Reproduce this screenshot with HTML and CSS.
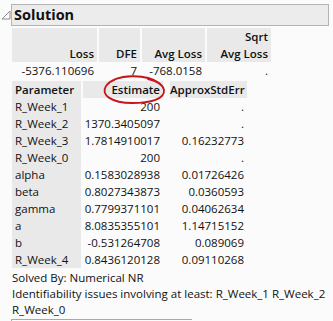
FILE: index.html
```html
<!DOCTYPE html>
<html>
<head>
<meta charset="utf-8">
<link rel="stylesheet" href="styles.css">
</head>
<body>
<div class="report">
  <div class="outline-head">
    <svg class="disclosure" width="10" height="10" viewBox="0 0 10 10"><polygon points="9,1 9,9 1,9" fill="#fdfdfd" stroke="#8a8a8a" stroke-width="1"/></svg>
    <div class="title-box">Solution</div>
  </div>
  <div class="outline-body">
    <div class="summary">
      <div class="hd">Loss</div>
      <div class="hd">DFE</div>
      <div class="hd">Avg Loss</div>
      <div class="hd">Sqrt<br>Avg Loss</div>
      <div class="cell">-5376.110696</div>
      <div class="cell">7</div>
      <div class="cell">-768.0158</div>
      <div class="cell">.</div>
    </div>
    <div class="params">
      <div class="hd lab">Parameter</div>
      <div class="hd">Estimate</div>
      <div class="hd">ApproxStdErr</div>

      <div class="lab">R_Week_1</div><div class="cell">200</div><div class="cell">.</div>
      <div class="lab">R_Week_2</div><div class="cell">1370.3405097</div><div class="cell">.</div>
      <div class="lab">R_Week_3</div><div class="cell">1.7814910017</div><div class="cell">0.16232773</div>
      <div class="lab">R_Week_0</div><div class="cell">200</div><div class="cell">.</div>
      <div class="lab">alpha</div><div class="cell">0.1583028938</div><div class="cell">0.01726426</div>
      <div class="lab">beta</div><div class="cell">0.8027343873</div><div class="cell">0.0360593</div>
      <div class="lab">gamma</div><div class="cell">0.7799371101</div><div class="cell">0.04062634</div>
      <div class="lab">a</div><div class="cell">8.0835355101</div><div class="cell">1.14715152</div>
      <div class="lab">b</div><div class="cell">-0.531264708</div><div class="cell">0.089069</div>
      <div class="lab">R_Week_4</div><div class="cell">0.8436120128</div><div class="cell">0.09110268</div>
    </div>
    <div class="notes">
      <div>Solved By: Numerical NR</div>
      <div>Identifiability issues involving at least: R_Week_1 R_Week_2 R_Week_0</div>
    </div>
  </div>
  <div class="next-box"></div>
  <svg class="annot" width="333" height="321" viewBox="0 0 333 321"><path d="M 159 83 C 147 74, 116 73, 106 86 C 100 95, 112 103, 132 103 C 151 103, 165 99, 164 90 C 163 85, 157 81, 148 79" fill="none" stroke="#c4161c" stroke-width="1.8" stroke-linecap="round"/></svg>
</div>
</body>
</html>
```
FILE: styles.css
```css
html, body {
  margin: 0;
  padding: 0;
  background: #fbfbfb;
}
body {
  font-family: "Open Sans", "Noto Sans", sans-serif;
  font-size: 11.5px;
  color: #111111;
  width: 333px;
  height: 321px;
  overflow: hidden;
}
.report {
  position: relative;
  padding-top: 4px;
}
.outline-head {
  display: flex;
  align-items: center;
}
.disclosure {
  margin-left: 1px;
  flex: none;
  display: block;
}
.title-box {
  width: 314px;
  height: 20px;
  border: 1px solid #b4b4b4;
  background: #ececec;
  font-weight: 700;
  font-size: 14.5px;
  line-height: 20px;
  padding-left: 2px;
  box-sizing: content-box;
}
.outline-body {
  padding-left: 12px;
  padding-top: 2px;
}
.summary {
  display: grid;
  grid-template-columns: 85px 41px 63px 64px;
  column-gap: 2px;
  line-height: 17px;
}
.summary .hd {
  background: #e9e9e9;
  font-weight: 600;
  text-align: right;
  padding-right: 3px;
  height: 34px;
  display: flex;
  flex-direction: column;
  justify-content: flex-end;
  align-items: flex-end;
}
.cell {
  text-align: right;
  padding-right: 3px;
  white-space: nowrap;
}
.params {
  display: grid;
  grid-template-columns: 69px 80px 82px;
  column-gap: 2px;
  line-height: 17px;
  margin-top: 2px;
}
.params .hd {
  background: #e9e9e9;
  font-weight: 600;
  text-align: right;
  padding-right: 3px;
}
.params .hd:nth-child(3) {
  margin-left: 5px;
}
.params .lab {
  background: #e9e9e9;
  text-align: left;
  padding-left: 3px;
  padding-right: 0;
}
.params .hd.lab {
  font-weight: 600;
}
.notes {
  margin-top: 2px;
  line-height: 16px;
  padding-right: 6px;
}
.next-box {
  margin-left: 11px;
  width: 180px;
  height: 10px;
  border-top: 1px solid #a8a8a8;
  border-left: 1px solid #a8a8a8;
  margin-top: 1px;
}
.annot {
  position: absolute;
  left: 0;
  top: 0;
  pointer-events: none;
}
```
